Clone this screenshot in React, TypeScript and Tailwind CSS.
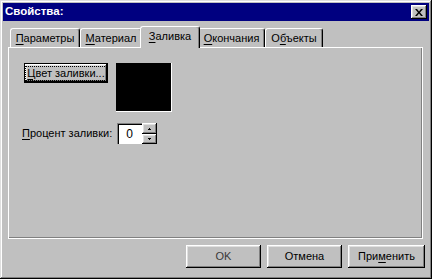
import React from "react";

const raised =
  "shadow-[inset_-1px_-1px_#000,inset_1px_1px_#fff,inset_-2px_-2px_#808080,inset_2px_2px_#dfdfdf]";

const Mn = ({ children }: { children: React.ReactNode }) => <span className="underline underline-offset-[2px]">{children}</span>;

const Tab = ({ w, active, children }: { w: string; active?: boolean; children: React.ReactNode }) => (
  <div
    className={`${w} ${
      active ? "h-[22px] -mx-[2px] z-10 -mb-px bg-[#c0c0c0] pb-[3px]" : "h-[19px]"
    } flex items-center justify-center whitespace-nowrap rounded-t-[3px] border-t border-l border-white border-r border-r-black shadow-[inset_-1px_0_#808080] text-black`}
  >
    {children}
  </div>
);

const Btn = ({ w, children, muted }: { w: string; children: React.ReactNode; muted?: boolean }) => (
  <div className={`${w} h-[23px] flex items-center justify-center whitespace-nowrap bg-[#c0c0c0] ${raised} ${muted ? "text-[#3a3a3a]" : "text-black"}`}>
    {children}
  </div>
);

export default function App() {
  return (
    <div
      className="w-[432px] h-[279px] bg-[#c0c0c0] flex flex-col p-[3px] shadow-[inset_-1px_-1px_#000,inset_1px_1px_#dfdfdf,inset_-2px_-2px_#808080,inset_2px_2px_#fff] text-[11px] leading-none"
      style={{ fontFamily: '"Liberation Sans", Arial, sans-serif' }}
    >
      {/* title bar */}
      <div className="h-[18px] bg-[#000080] flex items-center justify-between pl-[2px] pr-[2px]">
        <span className="text-white font-bold text-[11.5px]">Свойства:</span>
        <div className={`w-[16px] h-[14px] bg-[#c0c0c0] flex items-center justify-center ${raised}`}>
          <svg width="8" height="7" viewBox="0 0 8 7">
            <path d="M0 0h2l2 2.5 2-2.5h2L5 3.5 8 7H6L4 4.5 2 7H0l3-3.5z" fill="#000" />
          </svg>
        </div>
      </div>

      {/* tabs */}
      <div className="mt-[4px] ml-[5px] mr-[5px] flex items-end pl-[2px] h-[22px]">
        <Tab w="w-[70px]">
          <span><Mn>П</Mn>араметры</span>
        </Tab>
        <Tab w="w-[62px]">
          <span><Mn>М</Mn>атериал</span>
        </Tab>
        <Tab w="w-[60px]" active>
          <span><Mn>З</Mn>аливка</span>
        </Tab>
        <Tab w="w-[67px]">
          <span><Mn>О</Mn>кончания</span>
        </Tab>
        <Tab w="w-[58px]">
          <span>О<Mn>б</Mn>ъекты</span>
        </Tab>
      </div>

      {/* panel */}
      <div className="ml-[5px] mr-[6px] h-[192px] border-t border-l border-white border-r border-b border-black shadow-[inset_-1px_-1px_#808080] flex flex-col pl-[15px] pt-[15px]">
        <div className="flex gap-[8px]">
          <div className="w-[84px] h-[20px] border border-black bg-[#c0c0c0] flex">
            <div className={`flex-1 flex items-center justify-center whitespace-nowrap ${raised}`}>
              <span className="outline outline-1 outline-dotted outline-black px-[1px] py-[1px]">
                <Mn>Ц</Mn>вет заливки...
              </span>
            </div>
          </div>
          <div className="w-[56px] h-[49px] bg-black border-r border-b border-white" />
        </div>
        <div className="flex items-center mt-[11px] -ml-[2px]">
          <span className="w-[95px] whitespace-nowrap">
            <Mn>П</Mn>роцент заливки:
          </span>
          <div className="w-[25px] h-[21px] bg-white shadow-[inset_1px_1px_#808080,inset_2px_2px_#000,inset_-1px_-1px_#fff] flex items-center justify-center pt-[1px] text-[12px]">
            0
          </div>
          <div className="flex flex-col w-[15px] h-[21px]">
            <div className={`h-[11px] flex items-center justify-center ${raised}`}>
              <svg width="3" height="2" viewBox="0 0 3 2"><path d="M1 0h1v1h1v1H0V1h1z" fill="#000" /></svg>
            </div>
            <div className={`h-[10px] flex items-center justify-center ${raised}`}>
              <svg width="3" height="2" viewBox="0 0 3 2"><path d="M0 0h3v1H2v1H1V1H0z" fill="#000" /></svg>
            </div>
          </div>
        </div>
      </div>

      {/* buttons */}
      <div className="flex justify-end gap-[6px] mt-[6px] pr-[4px]">
        <Btn w="w-[75px]" muted>OK</Btn>
        <Btn w="w-[75px]">Отмена</Btn>
        <Btn w="w-[77px]">
          <span>При<Mn>м</Mn>енить</span>
        </Btn>
      </div>
    </div>
  );
}
